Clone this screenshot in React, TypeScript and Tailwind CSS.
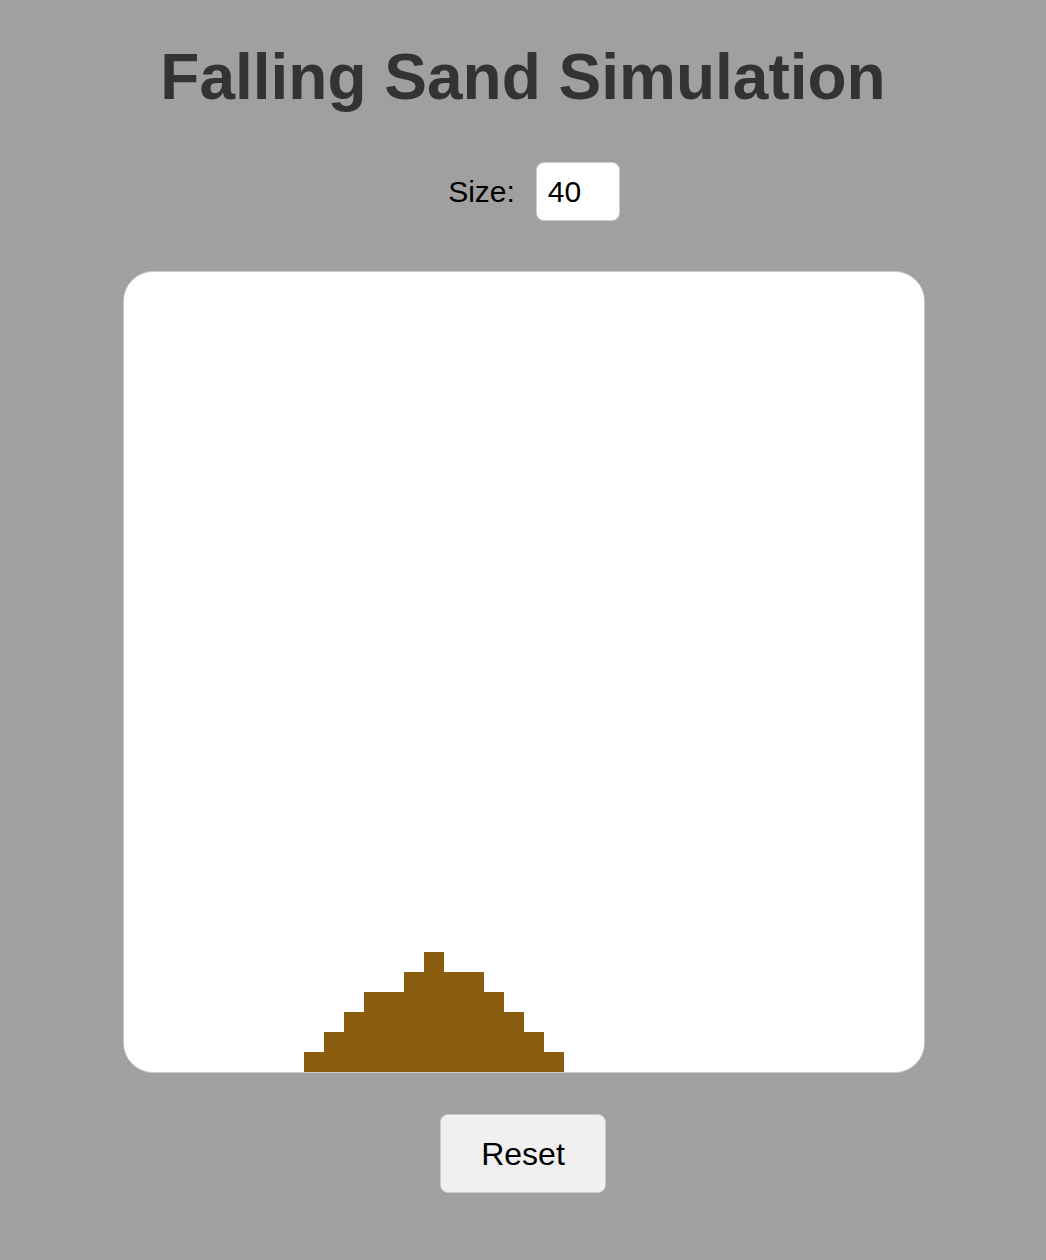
import { useState } from 'react';

const CELL = 20;

// rows counted from the top of a 40x40 grid: [row, firstCol, lastCol]
const pile: [number, number, number][] = [
  [34, 15, 15],
  [35, 14, 17],
  [36, 12, 18],
  [37, 11, 19],
  [38, 10, 20],
  [39, 9, 21],
];

export default function App() {
  const [size, setSize] = useState('40');

  return (
    <div className="min-h-screen bg-[#a0a0a0] flex flex-col items-center font-['Liberation_Sans',Arial,sans-serif]">
      <h1 className="mt-[45px] text-[64px] leading-none font-bold text-[#333333]">
        Falling Sand Simulation
      </h1>

      <div className="mt-[53px] ml-[22px] flex items-center gap-[21px]">
        <label className="text-[30px] text-black">Size:</label>
        <input
          value={size}
          onChange={(e) => setSize(e.target.value)}
          className="w-[84px] h-[59px] rounded-[8px] border border-[#cccccc] bg-white px-[11px] text-[30px] text-black outline-none"
        />
      </div>

      <div className="mt-[50px] ml-[2px] w-[802px] h-[802px] rounded-[30px] border border-[#c8c8c8] bg-white overflow-hidden">
        <svg width="800" height="800" viewBox="0 0 800 800" shapeRendering="crispEdges">
          {pile.flatMap(([row, from, to]) =>
            Array.from({ length: to - from + 1 }, (_, i) => (
              <rect
                key={`${row}-${from + i}`}
                x={(from + i) * CELL}
                y={row * CELL}
                width={CELL}
                height={CELL}
                fill="#8b5e0f"
              />
            ))
          )}
        </svg>
      </div>

      <button className="mt-[41px] w-[166px] h-[79px] rounded-[8px] border border-[#cccccc] bg-[#f0f0f0] text-[32px] text-black">
        Reset
      </button>
    </div>
  );
}
